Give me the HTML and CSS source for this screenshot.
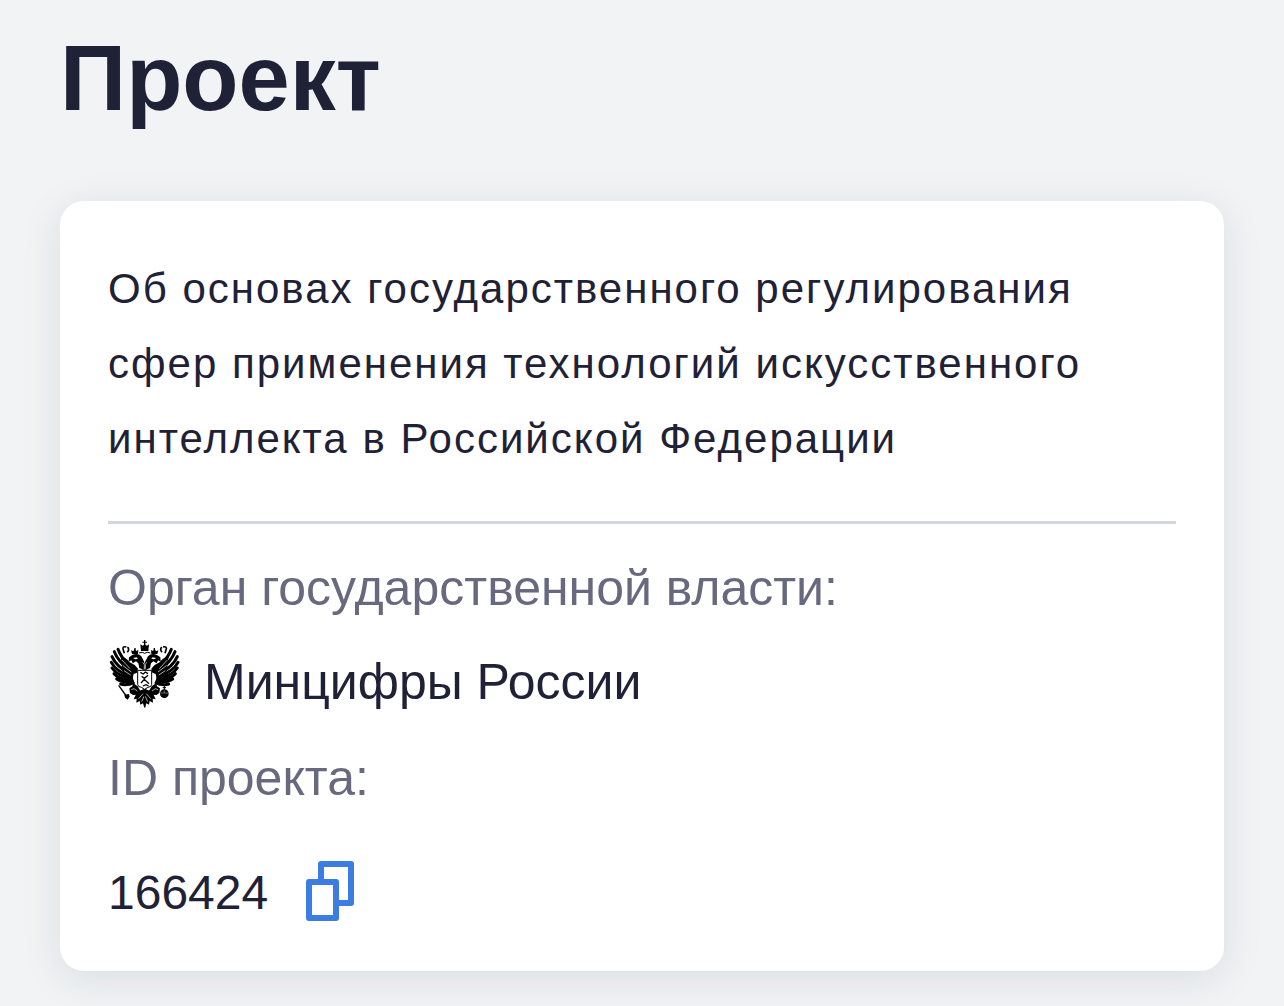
FILE: index.html
```html
<!DOCTYPE html>
<html lang="ru">
<head>
<meta charset="utf-8">
<meta name="viewport" content="width=device-width, initial-scale=1">
<title>Проект</title>
<link rel="stylesheet" href="styles.css">
</head>
<body>
<main class="page">
  <h1 class="page-title">Проект</h1>
  <section class="card">
    <p class="card-title">Об основах государственного регулирования сфер применения технологий искусственного интеллекта в Российской Федерации</p>
    <dl class="details">
      <dt class="label">Орган государственной власти:</dt>
      <dd class="value agency">
        <svg class="emblem" viewBox="12 6 216 228" aria-hidden="true">
          <defs>
            <g id="half">
              <!-- wing feathers -->
              <g fill="none" stroke="#000" stroke-width="9" stroke-linecap="round">
                <path d="M42 40Q50 62 74 88"/>
                <path d="M31 47Q42 76 78 103"/>
                <path d="M24 62Q37 92 78 113"/>
                <path d="M22 79Q36 106 78 121"/>
                <path d="M24 96Q40 119 80 127"/>
                <path d="M30 113Q46 131 82 131"/>
                <path d="M38 129Q54 141 85 136"/>
                <path d="M50 144Q66 149 88 141"/>
              </g>
              <path d="M50 60Q66 64 77 79Q91 84 102 98L99 110L89 114Q84 128 91 139L78 149L68 138L58 117L54 91Z"/>
              <g fill="none" stroke="#fff" stroke-width="2">
                <path d="M54 72L78 98M56 88L82 108M60 104L80 117"/>
              </g>
              <!-- head, beak and side crown -->
              <path d="M74 77L75 64L85 57Q101 50 112 61L121 78L118 101L106 96L103 82L96 76L86 82L82 73Z"/>
              <path d="M84 54L81 43L88 46L92 38L97 45L103 42L102 54Z"/>
              <path d="M91 36H95V43H91Z"/>
              <path d="M87 66L98 64L102 68L94 70Z" fill="#fff"/>
              <!-- ribbon -->
              <path d="M67 33Q53 30 58 42L61 52M70 34Q78 38 70 49" fill="none" stroke="#000" stroke-width="5"/>
              <!-- leg and talon -->
              <path d="M88 142L101 151L109 164L101 176L87 177L78 171L76 157L85 151Z"/>
              <path d="M82 161L90 158L100 165" fill="none" stroke="#fff" stroke-width="2"/>
              <!-- tail -->
              <path d="M120 159L107 164L96 175L89 190L98 188L97 200L107 195L109 206L117 202L120 212L124 215V159Z"/>
              <path d="M117 173L104 188M120 181L113 197" stroke="#fff" stroke-width="2"/>
            </g>
          </defs>
          <use href="#half"/>
          <use href="#half" transform="matrix(-1 0 0 1 244 0)"/>
          <!-- central crown -->
          <path d="M120 12H124V17H129V20H124V26L129 29L135 25L133 45H111L109 25L116 29L120 26V20H115V17H120Z"/>
          <path d="M105 51Q115 46 122 52Q129 46 139 51" fill="none" stroke="#000" stroke-width="3"/>
          <!-- neck feathers -->
          <path d="M111 66L122 83L133 66L128 101H116Z"/>
          <path d="M116 79L121 86V99M128 79L124 86V99" fill="none" stroke="#fff" stroke-width="2"/>
          <!-- shield with rider -->
          <path d="M101 103H143V145Q143 153 132 154L122 160L112 154Q101 153 101 145Z" fill="#fff" stroke="#000" stroke-width="3"/>
          <path d="M109 109L118 114L124 108L132 113M113 121L121 127L132 118M111 141L121 130L135 143M117 150L126 146L134 150" fill="none" stroke="#000" stroke-width="4"/>
          <!-- sceptre and orb -->
          <path d="M44 148L69 183" stroke="#000" stroke-width="4"/>
          <path d="M61 176L75 174L77 182L71 191L63 185Z"/>
          <circle cx="181" cy="173" r="13"/>
          <path d="M181 150V163M176 155H186" stroke="#000" stroke-width="3"/>
          <path d="M170 171H192M181 163V171" stroke="#999" stroke-width="2"/>
        </svg>
        <span>Минцифры России</span>
      </dd>
      <dt class="label">ID проекта:</dt>
      <dd class="value project-id">
        <span>166424</span>
        <button class="copy" type="button" aria-label="Скопировать ID">
          <svg viewBox="0 0 48 60" aria-hidden="true"><path d="M15 18V3H45V42H33M3 21H30V57H3Z"/></svg>
        </button>
      </dd>
    </dl>
  </section>
</main>
</body>
</html>
```
FILE: styles.css
```css
* { box-sizing: border-box; }
body {
  margin: 0;
  background: #f1f3f5;
  color: #1f2136;
  font-family: "Liberation Sans", Arial, sans-serif;
}
.page { padding: 28px 60px 35px; }
.page-title { margin: 0 0 73px; font-size: 92px; line-height: 100px; }
.card {
  padding: 50px 48px 46px;
  background: #fff;
  border-radius: 24px;
  box-shadow: 0 8px 40px rgba(31, 40, 54, 0.1);
}
.card-title {
  margin: 0;
  padding-bottom: 45px;
  border-bottom: 3px solid #d5d5df;
  font-size: 42px;
  line-height: 75px;
  letter-spacing: 2px;
}
.details { margin: 0; font-size: 50px; line-height: 64px; }
.label { padding-top: 32px; color: #68697f; }
.value { display: flex; margin: 0; }
.agency { align-items: flex-end; gap: 24px; padding-top: 18px; }
.emblem { width: 72px; height: 76px; }
.project-id { align-items: flex-start; gap: 38px; padding-top: 51px; font-size: 48px; }
.copy { padding: 0; border: 0; background: none; cursor: pointer; }
.copy svg { display: block; width: 48px; height: 60px; fill: none; stroke: #3b7de0; stroke-width: 6; stroke-linejoin: round; }
```
